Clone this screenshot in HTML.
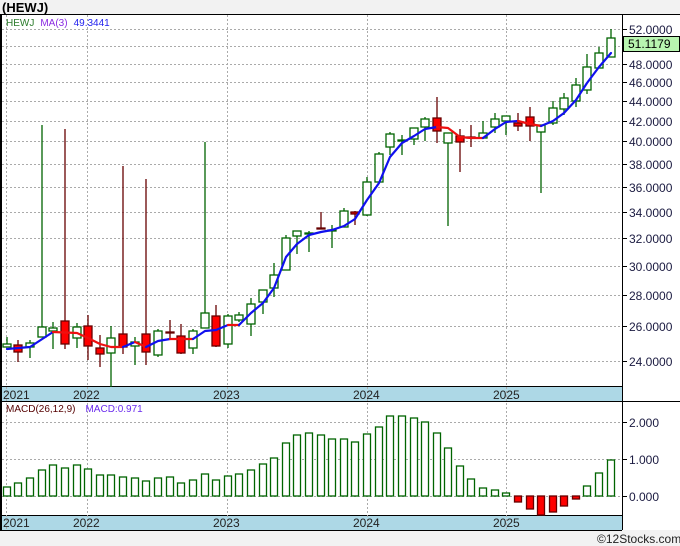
<!DOCTYPE html>
<html><head><meta charset="utf-8"><style>
body{margin:0;background:#f2f2f2;width:680px;height:546px;overflow:hidden;font-family:"Liberation Sans","DejaVu Sans",sans-serif}
svg{display:block}
</style></head><body>
<svg width="680" height="546" viewBox="0 0 680 546" xmlns="http://www.w3.org/2000/svg" font-family="Liberation Sans, DejaVu Sans, sans-serif">
<rect x="0" y="0" width="680" height="546" fill="#f2f2f2"/>
<text x="2" y="12" font-size="13" font-weight="bold" fill="#000">(HEWJ)</text>
<!-- panels -->
<rect x="1" y="14" width="679" height="516" fill="#fff"/>
<rect x="1" y="387" width="621" height="14" fill="#add8e6"/>
<rect x="1" y="515" width="621" height="15" fill="#add8e6"/>
<g stroke="#000" stroke-width="1" fill="none">
<line x1="0" y1="14.5" x2="680" y2="14.5"/>
<line x1="1" y1="14" x2="1" y2="530" stroke-width="2"/>
<line x1="622.5" y1="14" x2="622.5" y2="530"/>
<line x1="0" y1="386.5" x2="622" y2="386.5"/>
<line x1="0" y1="401.5" x2="680" y2="401.5"/>
<line x1="0" y1="515.5" x2="622" y2="515.5"/>
<line x1="0" y1="530.5" x2="622" y2="530.5"/>
</g>
<!-- grid -->
<g stroke="#aaa" stroke-width="1" stroke-dasharray="2,2">
<line x1="2" y1="29.5" x2="622" y2="29.5"/>
<line x1="2" y1="46.5" x2="622" y2="46.5"/>
<line x1="2" y1="64.5" x2="622" y2="64.5"/>
<line x1="2" y1="82.5" x2="622" y2="82.5"/>
<line x1="2" y1="101.5" x2="622" y2="101.5"/>
<line x1="2" y1="121.5" x2="622" y2="121.5"/>
<line x1="2" y1="141.5" x2="622" y2="141.5"/>
<line x1="2" y1="164.5" x2="622" y2="164.5"/>
<line x1="2" y1="187.5" x2="622" y2="187.5"/>
<line x1="2" y1="212.5" x2="622" y2="212.5"/>
<line x1="2" y1="238.5" x2="622" y2="238.5"/>
<line x1="2" y1="266.5" x2="622" y2="266.5"/>
<line x1="2" y1="295.5" x2="622" y2="295.5"/>
<line x1="2" y1="326.5" x2="622" y2="326.5"/>
<line x1="2" y1="361.5" x2="622" y2="361.5"/>
<line x1="2" y1="422.5" x2="622" y2="422.5"/>
<line x1="2" y1="459.5" x2="622" y2="459.5"/>
<line x1="2" y1="496.5" x2="622" y2="496.5"/>
<line x1="6.5" y1="15" x2="6.5" y2="530"/>
<line x1="87.5" y1="15" x2="87.5" y2="530"/>
<line x1="227.5" y1="15" x2="227.5" y2="530"/>
<line x1="367.5" y1="15" x2="367.5" y2="530"/>
<line x1="506.5" y1="15" x2="506.5" y2="530"/>
</g>
<!-- year labels -->
<g font-size="12" fill="#222">
<text x="3" y="399">2021</text><text x="73" y="399">2022</text><text x="213" y="399">2023</text><text x="353" y="399">2024</text><text x="493" y="399">2025</text>
<text x="3" y="527">2021</text><text x="73" y="527">2022</text><text x="213" y="527">2023</text><text x="353" y="527">2024</text><text x="493" y="527">2025</text>
</g>
<!-- right axis -->
<g stroke="#000" stroke-width="1">
<line x1="622" y1="29.5" x2="627" y2="29.5"/><line x1="622" y1="64.5" x2="627" y2="64.5"/><line x1="622" y1="82.5" x2="627" y2="82.5"/><line x1="622" y1="101.5" x2="627" y2="101.5"/><line x1="622" y1="121.5" x2="627" y2="121.5"/><line x1="622" y1="141.5" x2="627" y2="141.5"/><line x1="622" y1="164.5" x2="627" y2="164.5"/><line x1="622" y1="187.5" x2="627" y2="187.5"/><line x1="622" y1="212.5" x2="627" y2="212.5"/><line x1="622" y1="238.5" x2="627" y2="238.5"/><line x1="622" y1="266.5" x2="627" y2="266.5"/><line x1="622" y1="295.5" x2="627" y2="295.5"/><line x1="622" y1="326.5" x2="627" y2="326.5"/><line x1="622" y1="361.5" x2="627" y2="361.5"/>
<line x1="622" y1="422.5" x2="627" y2="422.5"/><line x1="622" y1="459.5" x2="627" y2="459.5"/><line x1="622" y1="496.5" x2="627" y2="496.5"/>
</g>
<g font-size="12" fill="#1a1a40">
<text x="629" y="34">52.0000</text><text x="629" y="69">48.0000</text><text x="629" y="87">46.0000</text><text x="629" y="106">44.0000</text><text x="629" y="126">42.0000</text><text x="629" y="146">40.0000</text><text x="629" y="169">38.0000</text><text x="629" y="192">36.0000</text><text x="629" y="217">34.0000</text><text x="629" y="243">32.0000</text><text x="629" y="271">30.0000</text><text x="629" y="300">28.0000</text><text x="629" y="331">26.0000</text><text x="629" y="366">24.0000</text>
<text x="629" y="427">2.000</text><text x="629" y="464">1.000</text><text x="629" y="501">0.000</text>
</g>
<rect x="623.5" y="36.5" width="56" height="15" fill="#b8f5b0" stroke="#000"/>
<text x="628" y="48" font-size="12" fill="#000">51.1179</text>
<!-- legends -->
<text x="6" y="26" font-size="10"><tspan fill="#2a7a2a">HEWJ</tspan><tspan fill="#8a2be2" dx="6">MA(3)</tspan><tspan fill="#2222ee" dx="6">49.3441</tspan></text>
<text x="6" y="412" font-size="10"><tspan fill="#500">MACD(26,12,9)</tspan><tspan fill="#6a2bee" dx="10">MACD:0.971</tspan></text>
<!-- wicks -->
<g stroke-width="1.3">
<g stroke="#006400">
<line x1="7" y1="337" x2="7" y2="347"/><line x1="30" y1="340" x2="30" y2="358"/><line x1="42" y1="125" x2="42" y2="337"/><line x1="53" y1="322" x2="53" y2="349"/><line x1="77" y1="323" x2="77" y2="348"/><line x1="111" y1="326" x2="111" y2="387"/><line x1="135" y1="337" x2="135" y2="365"/><line x1="158" y1="329" x2="158" y2="357"/><line x1="193" y1="329" x2="193" y2="354"/><line x1="205" y1="142" x2="205" y2="328"/><line x1="228" y1="314" x2="228" y2="348"/><line x1="239" y1="312" x2="239" y2="322"/><line x1="251" y1="298" x2="251" y2="336"/><line x1="263" y1="290" x2="263" y2="314"/><line x1="274" y1="263" x2="274" y2="297"/><line x1="286" y1="235" x2="286" y2="270"/><line x1="297" y1="231" x2="297" y2="254"/><line x1="309" y1="231" x2="309" y2="252"/><line x1="332" y1="225" x2="332" y2="248"/><line x1="344" y1="208" x2="344" y2="227"/><line x1="367" y1="177" x2="367" y2="216"/><line x1="379" y1="152" x2="379" y2="182"/><line x1="390" y1="132" x2="390" y2="155"/><line x1="402" y1="135" x2="402" y2="155"/><line x1="414" y1="128" x2="414" y2="145"/><line x1="425" y1="117" x2="425" y2="141"/><line x1="448" y1="133" x2="448" y2="226"/><line x1="483" y1="121" x2="483" y2="138"/><line x1="495" y1="113" x2="495" y2="133"/><line x1="506" y1="116" x2="506" y2="135"/><line x1="541" y1="125" x2="541" y2="193"/><line x1="553" y1="101" x2="553" y2="125"/><line x1="564" y1="93" x2="564" y2="115"/><line x1="576" y1="78" x2="576" y2="107"/><line x1="587" y1="54" x2="587" y2="94"/><line x1="599" y1="47" x2="599" y2="68"/><line x1="611" y1="29" x2="611" y2="57"/>
</g>
<g stroke="#600">
<line x1="18" y1="340" x2="18" y2="362"/><line x1="65" y1="129" x2="65" y2="349"/><line x1="88" y1="315" x2="88" y2="360"/><line x1="100" y1="335" x2="100" y2="367"/><line x1="123" y1="166" x2="123" y2="354"/><line x1="146" y1="179" x2="146" y2="365"/><line x1="170" y1="320" x2="170" y2="339"/><line x1="181" y1="324" x2="181" y2="354"/><line x1="216" y1="305" x2="216" y2="347"/><line x1="321" y1="212" x2="321" y2="229"/><line x1="355" y1="211" x2="355" y2="225"/><line x1="437" y1="97" x2="437" y2="143"/><line x1="460" y1="129" x2="460" y2="172"/><line x1="471" y1="125" x2="471" y2="147"/><line x1="518" y1="113" x2="518" y2="131"/><line x1="530" y1="107" x2="530" y2="141"/>
</g>
</g>
<!-- bodies -->
<g fill="#fff" stroke="#006400" stroke-width="1.3">
<rect x="3" y="344" width="8" height="3"/><rect x="26" y="343" width="8" height="4"/><rect x="38" y="327" width="8" height="10"/><rect x="49" y="328" width="8" height="3"/><rect x="73" y="327" width="8" height="11"/><rect x="107" y="338" width="8" height="15"/><rect x="131" y="342" width="8" height="4"/><rect x="154" y="331" width="8" height="24"/><rect x="189" y="331" width="8" height="17"/><rect x="201" y="313" width="8" height="15"/><rect x="224" y="316" width="8" height="28"/><rect x="235" y="315" width="8" height="5"/><rect x="247" y="304" width="8" height="20"/><rect x="259" y="290" width="8" height="12"/><rect x="270" y="275" width="8" height="13"/><rect x="282" y="238" width="8" height="32"/><rect x="293" y="231" width="8" height="5"/><rect x="305" y="233" width="8" height="1"/><rect x="328" y="230" width="8" height="1"/><rect x="340" y="211" width="8" height="16"/><rect x="363" y="182" width="8" height="33"/><rect x="375" y="154" width="8" height="28"/><rect x="386" y="134" width="8" height="13"/><rect x="398" y="140" width="8" height="1"/><rect x="410" y="128" width="8" height="11"/><rect x="421" y="119" width="8" height="8"/><rect x="444" y="133" width="8" height="10"/><rect x="479" y="133" width="8" height="5"/><rect x="491" y="119" width="8" height="8"/><rect x="502" y="116" width="8" height="5"/><rect x="537" y="125" width="8" height="7"/><rect x="549" y="108" width="8" height="15"/><rect x="560" y="98" width="8" height="11"/><rect x="572" y="85" width="8" height="16"/><rect x="583" y="67" width="8" height="23"/><rect x="595" y="53" width="8" height="15"/><rect x="607" y="38" width="8" height="19"/>
</g>
<g fill="#f00" stroke="#600" stroke-width="1.3">
<rect x="14" y="345" width="8" height="7"/><rect x="61" y="321" width="8" height="23"/><rect x="84" y="326" width="8" height="20"/><rect x="96" y="348" width="8" height="6"/><rect x="119" y="334" width="8" height="13"/><rect x="142" y="334" width="8" height="18"/><rect x="166" y="332" width="8" height="1"/><rect x="177" y="336" width="8" height="17"/><rect x="212" y="316" width="8" height="30"/><rect x="317" y="228" width="8" height="1"/><rect x="351" y="212" width="8" height="2"/><rect x="433" y="118" width="8" height="13"/><rect x="456" y="136" width="8" height="6"/><rect x="467" y="137" width="8" height="1"/><rect x="514" y="123" width="8" height="3"/><rect x="526" y="117" width="8" height="9"/>
</g>
<!-- MA line -->
<g fill="none" stroke-width="2.2" stroke-linejoin="round" stroke-linecap="round">
<polyline stroke="#1010ee" points="7,349 30,347 53,332"/>
<polyline stroke="#ee1010" points="53,332 77,333 88,338 100,344 111,347 123,347"/>
<polyline stroke="#1010ee" points="123,347 135,342"/>
<polyline stroke="#ee1010" points="135,342 146,347"/>
<polyline stroke="#1010ee" points="146,347 158,341 170,339"/>
<polyline stroke="#ee1010" points="170,339 193,339"/>
<polyline stroke="#1010ee" points="193,339 205,331 216,330 228,325"/>
<polyline stroke="#ee1010" points="228,325 239,325"/>
<polyline stroke="#1010ee" points="239,325 251,313 263,303 274,288 286,257 297,244 309,235 321,232 332,230 344,226 355,219 367,200 379,183 390,157 402,143 414,136 425,129 437,127"/>
<polyline stroke="#ee1010" points="437,127 448,128 460,137 471,138 483,138"/>
<polyline stroke="#1010ee" points="483,138 495,129 506,122 518,121"/>
<polyline stroke="#ee1010" points="518,121 530,124 541,126"/>
<polyline stroke="#1010ee" points="541,126 553,121 564,113 576,100 587,83 599,67 611,53"/>
</g>
<!-- MACD bars -->
<g fill="#fff" stroke="#006400" stroke-width="1.3">
<rect x="3.5" y="487" width="7" height="9"/><rect x="14.5" y="483" width="7" height="13"/><rect x="26.5" y="478" width="7" height="18"/><rect x="38.5" y="470" width="7" height="26"/><rect x="49.5" y="465" width="7" height="31"/><rect x="61.5" y="468" width="7" height="28"/><rect x="73.5" y="465" width="7" height="31"/><rect x="84.5" y="469" width="7" height="27"/><rect x="96.5" y="475" width="7" height="21"/><rect x="107.5" y="475" width="7" height="21"/><rect x="119.5" y="477" width="7" height="19"/><rect x="131.5" y="478" width="7" height="18"/><rect x="142.5" y="481" width="7" height="15"/><rect x="154.5" y="478" width="7" height="18"/><rect x="166.5" y="477" width="7" height="19"/><rect x="177.5" y="483" width="7" height="13"/><rect x="189.5" y="480" width="7" height="16"/><rect x="201.5" y="474" width="7" height="22"/><rect x="212.5" y="480" width="7" height="16"/><rect x="224.5" y="476" width="7" height="20"/><rect x="235.5" y="474" width="7" height="22"/><rect x="247.5" y="470" width="7" height="26"/><rect x="259.5" y="464" width="7" height="32"/><rect x="270.5" y="458" width="7" height="38"/><rect x="282.5" y="443" width="7" height="53"/><rect x="293.5" y="435" width="7" height="61"/><rect x="305.5" y="433" width="7" height="63"/><rect x="317.5" y="435" width="7" height="61"/><rect x="328.5" y="439" width="7" height="57"/><rect x="340.5" y="439" width="7" height="57"/><rect x="351.5" y="442" width="7" height="54"/><rect x="363.5" y="434" width="7" height="62"/><rect x="375.5" y="427" width="7" height="69"/><rect x="386.5" y="416" width="7" height="80"/><rect x="398.5" y="416" width="7" height="80"/><rect x="410.5" y="418" width="7" height="78"/><rect x="421.5" y="422" width="7" height="74"/><rect x="433.5" y="433" width="7" height="63"/><rect x="444.5" y="448" width="7" height="48"/><rect x="456.5" y="466" width="7" height="30"/><rect x="467.5" y="479" width="7" height="17"/><rect x="479.5" y="488" width="7" height="8"/><rect x="491.5" y="490" width="7" height="6"/><rect x="502.5" y="493" width="7" height="3"/><rect x="583.5" y="486" width="7" height="10"/><rect x="595.5" y="473" width="7" height="23"/><rect x="607.5" y="460" width="7" height="36"/>
</g>
<g fill="#f00" stroke="#600" stroke-width="1.3">
<rect x="514.5" y="496" width="7" height="6"/><rect x="526.5" y="496" width="7" height="13"/><rect x="537.5" y="496" width="7" height="19"/><rect x="549.5" y="496" width="7" height="16"/><rect x="560.5" y="496" width="7" height="10"/><rect x="572.5" y="496" width="7" height="3"/>
</g>
<text x="597" y="543" font-size="12" fill="#222">©12Stocks.com</text>
</svg>
</body></html>
